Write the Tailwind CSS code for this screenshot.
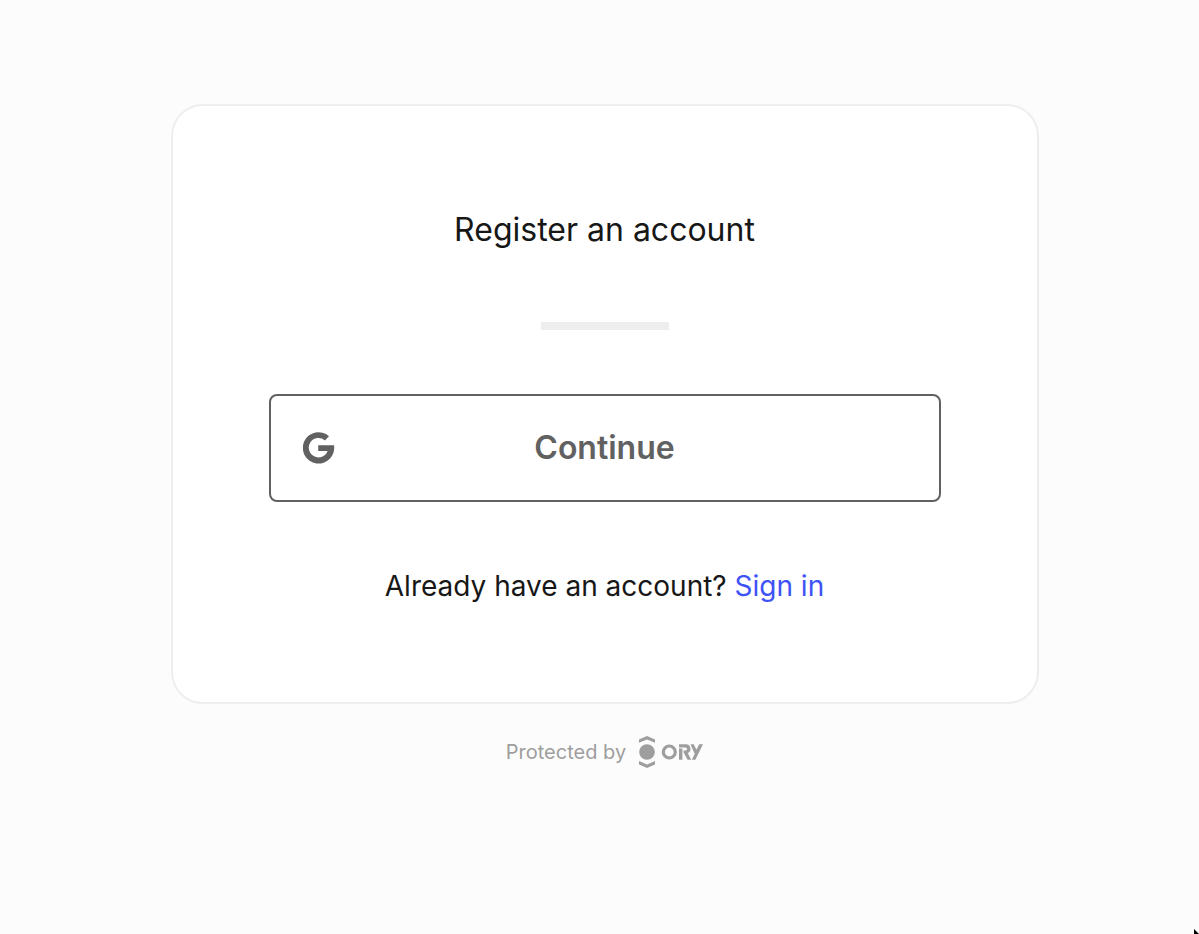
<!DOCTYPE html>
<html lang="en">
<head>
<meta charset="utf-8">
<meta name="viewport" content="width=device-width, initial-scale=1">
<title>Register an account</title>
<script src="https://cdn.jsdelivr.net/npm/@tailwindcss/browser@4"></script>
</head>
<body class="relative min-h-screen overflow-x-hidden bg-[#fcfcfc] font-['Inter',sans-serif] text-[#171717]">
<main class="ml-2.5 flex flex-col items-center px-4 pt-26">
  <section class="flex w-full max-w-[868px] flex-col items-center rounded-[32px] border-2 border-[#eeeeee] bg-white p-24">
    <h1 class="text-[32px] leading-14">Register an account</h1>
    <hr class="mt-16 h-2 w-32 border-0 bg-[#eeeeee]">
    <button type="button" class="relative mt-16 flex w-full items-center justify-center rounded-lg border-2 border-[#616161] px-8 py-8 text-[32px] leading-10 font-semibold text-[#616161]">
      <svg class="absolute left-8 size-8" viewBox="0 0 32 32" fill="#616161" aria-hidden="true"><path d="M26 4.2A15.7 15.7 0 1 0 31 13.3H15.2V19H24.6A9.7 9.7 0 1 1 21.9 8.4Z"/></svg>
      Continue
    </button>
    <p class="mt-16 text-[28px] leading-10">Already have an account? <a href="#" class="text-[#3d53f5]">Sign in</a></p>
  </section>
  <footer class="mt-8 flex items-center gap-3 text-xl leading-8 text-[#9e9e9e]">
    <span>Protected by</span>
    <svg class="h-8 w-[65px]" viewBox="0 0 65 32" fill="#9e9e9e" role="img" aria-label="Ory">
      <g transform="translate(1)">
      <path d="M0 3.4 8 0 16 3.4V6.8L8 3.4 0 6.8ZM0 25 8 28.4 16 25V28.4L8 32 0 28.4Z"/>
      <circle cx="8" cy="16" r="7.8"/>
      <circle cx="30.3" cy="16" r="6" fill="none" stroke="#9e9e9e" stroke-width="3.2"/>
      <path d="M40 8.2H46.5A4.6 4.6 0 0 1 48.7 17L52.2 23.8H48.6L44.6 16.4V14.6H46.4A1.5 1.5 0 0 0 46.4 11.4H40ZM40 12.6H43.4V23.8H40Z"/>
      <path d="M51.4 8.2H54.8L57.4 13.8 60.2 8.2H64L56.4 23.8H52.8L55.7 17.8Z"/>
      </g>
    </svg>
  </footer>
</main>
<svg class="pointer-events-none absolute right-0 bottom-0 h-[5px] w-[5px]" viewBox="0 0 5 5" aria-hidden="true"><path d="M0 0V5H5Z"/></svg>
</body>
</html>
